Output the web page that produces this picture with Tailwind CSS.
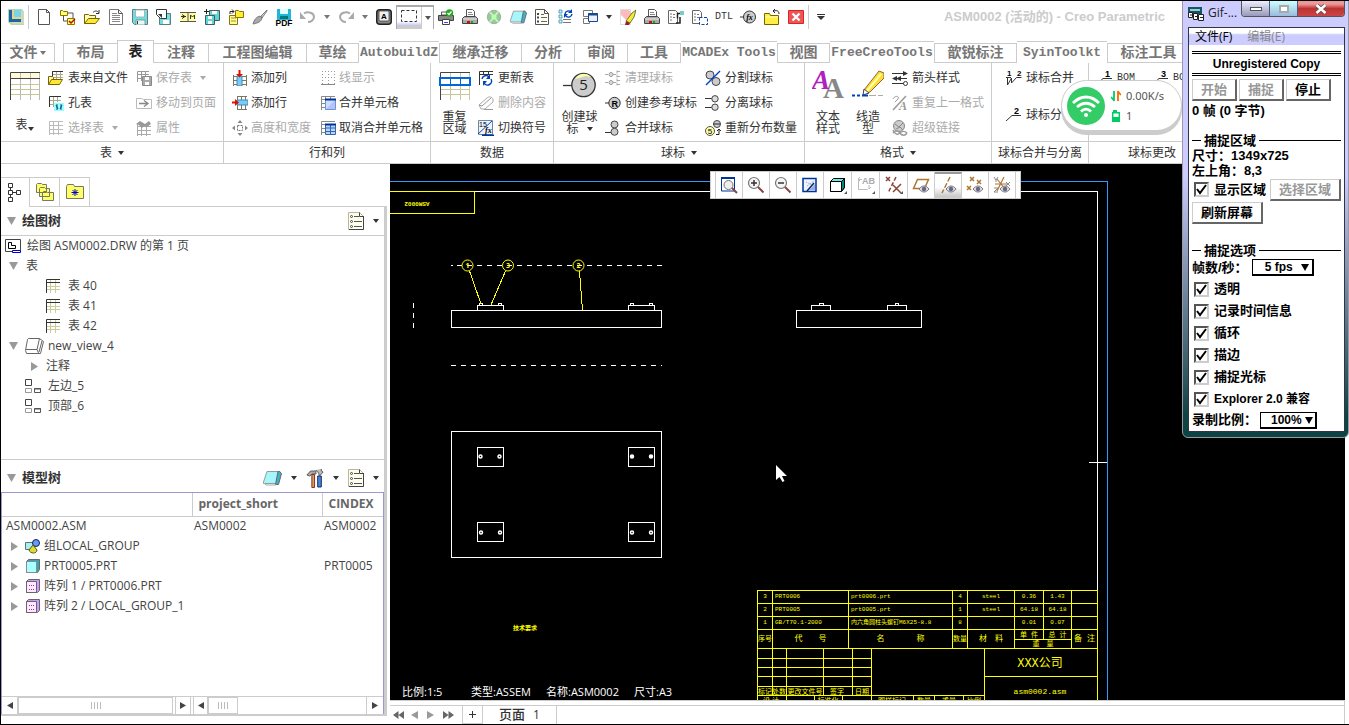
<!DOCTYPE html>
<html lang="zh-CN">
<head>
<meta charset="utf-8">
<title>ASM0002 (活动的) - Creo Parametric</title>
<script src="https://cdn.jsdelivr.net/npm/@tailwindcss/browser@4"></script>
</head>
<body class="bg-black font-['Open_Sans','Noto_Sans_CJK_SC',sans-serif] text-xs text-[#333]">
<svg class="hidden" aria-hidden="true">
  <symbol id="doc" viewBox="0 0 16 16"><path d="M2.5.5h8l3 3v12h-11z" fill="#fff" stroke="#555"/><path d="M10.5.5v3h3" fill="none" stroke="#555"/></symbol>
  <symbol id="doclines" viewBox="0 0 16 16"><path d="M1.500.5h9l4 4v11h-13z" fill="#fff" stroke="#777"/><path d="M10.500.5v4h4" fill="none" stroke="#555"/><path d="M4 4.500h5M4 6.500h8M4 8.500h8M4 10.500h8M4 12.500h8" stroke="#888"/></symbol>
  <symbol id="regen" viewBox="0 0 16 16"><path d="M.5 1.500h2l1 1h4v4h-7zM7.500 9.500h7v6h-7z" fill="#ffff66" stroke="#887700"/><path d="M3.500 7v5h4M8 4h5v5" fill="none" stroke="#555"/><path d="M9 12l2 2 4-4" fill="none" stroke="#c00" stroke-width="1.500"/></symbol>
  <symbol id="open" viewBox="0 0 16 16"><path d="M.5 14.500v-9h4l1 1h6v3" fill="#fffbb0" stroke="#776600"/><path d="M.5 14.500l4-5h11l-4 5z" fill="#ffe733" stroke="#776600"/><path d="M9 3.500c2-2 4-2 5.500 0M15 1v3.500h-3" fill="none" stroke="#333"/></symbol>
  <symbol id="save" viewBox="0 0 16 16"><path d="M.5.5h15v15h-13l-2-2z" fill="#6fdfe2" stroke="#667b80"/><path d="M3.500 1h9v7h-9z" fill="#fff" stroke="#9bb"/><path d="M4 11h9v5H4z" fill="#e8f7f8" stroke="#667b80" stroke-width=".7"/><path d="M5.500 12v3" stroke="#333"/></symbol>
  <symbol id="saveas" viewBox="0 0 16 16"><path d="M3.500 4.500h11v11h-11z" fill="#6fdfe2" stroke="#667b80"/><path d="M7 11h6v4H7z" fill="#fff"/><path d="M.5.500h10v9h-6l-4-4z" fill="#fff" stroke="#333"/><path d="M2 5h4v4z" fill="#333"/></symbol>
  <symbol id="map" viewBox="0 0 16 16"><path d="M0 3h16v10H0z" fill="#fffda0"/><path d="M0 3.500h16M0 12.500h16M8 3v10" stroke="#555"/><path d="M1 7.500h5M2 5.500l3 2-3 2M10.500 10V6l2 2 2-2v4" fill="none" stroke="#333"/></symbol>
  <symbol id="savecopy" viewBox="0 0 16 16"><path d="M5.500 1.500h10v10h-10z" fill="#5fd5d8" stroke="#445b60"/><path d="M8 2h5v3H8z" fill="#fff"/><path d="M1.500 6.500h9v9h-9z" fill="#5fd5d8" stroke="#445b60"/><path d="M4 7h4v3H4zM4 12h4v3H4z" fill="#fff"/><path d="M0 2.500h5M2.500 0v5" stroke="#222"/></symbol>
  <symbol id="copyopen" viewBox="0 0 16 16"><path d="M1.500 6.500h8v9h-8z" fill="#fff8a0" stroke="#887700"/><path d="M3 9h5M3 12h5" stroke="#a90"/><path d="M7.500 1.500h3l1 1h4v6h-8z" fill="#ffee33" stroke="#887700"/><path d="M2 5V2.500h4M4 .5l2 2-2 2" fill="none" stroke="#222"/></symbol>
  <symbol id="brush" viewBox="0 0 16 16"><path d="M15 1l-6 6 1 2 5-7z" fill="#ccc" stroke="#666" stroke-width=".8"/><path d="M1 15c1-4 3-7 7-8l2 2c-1 4-4 5-9 6z" fill="#aaa" stroke="#666" stroke-width=".8"/></symbol>
  <symbol id="pdf" viewBox="0 0 18 18"><path d="M2 1h14v11H2z" fill="#22b5d8"/><path d="M5 1h8v5H5z" fill="#dff"/><path d="M5 8h8v3H5z" fill="#077"/><text x="9" y="18" text-anchor="middle" font-family="Liberation Sans" font-weight="bold" font-size="8.500">PDF</text></symbol>
  <symbol id="undo" viewBox="0 0 16 16"><path d="M4 4.500C8 2 14 4 14 8c0 3-3 5-6 5" fill="none" stroke="#aaa" stroke-width="2"/><path d="M0 3v7h6z" fill="#aaa"/></symbol>
  <symbol id="akey" viewBox="0 0 16 16"><rect x=".75" y=".75" width="14.500" height="14.500" rx="3" fill="#888" stroke="#222" stroke-width="1.500"/><rect x="3" y="2" width="10" height="10" rx="1" fill="#eee" stroke="#333" stroke-width=".7"/><text x="8" y="10" text-anchor="middle" font-family="Liberation Sans" font-weight="bold" font-size="8">A</text></symbol>
  <symbol id="printer" viewBox="0 0 16 16"><path d="M4.500.5h6l2 2v6h-8z" fill="#fff" stroke="#555"/><path d="M6 3.500h4M6 5.500h5" stroke="#888"/><path d="M2.500 7.500h11l2 2v5h-15v-5z" fill="#aaa" stroke="#444"/><path d="M1 10h14" stroke="#eee"/><path d="M5 12h3v2H5z" fill="#e00"/><path d="M9 12h2v2H9z" fill="#0b0"/></symbol>
  <symbol id="printok" viewBox="0 0 16 16"><path d="M3.500 3v3h9V3z" fill="#fff" stroke="#555"/><path d="M.5 6.500h15v5H.5z" fill="#888" stroke="#444"/><path d="M4.500 10.500h7v5h-7z" fill="#fff" stroke="#444"/><path d="M6 13.500h4" stroke="#44f"/><circle cx="11.500" cy="4" r="3.700" fill="#2a2"/><path d="M9.500 4l1.500 1.500L13.500 2.500" stroke="#fff" fill="none" stroke-width="1.200"/></symbol>
  <symbol id="globe" viewBox="0 0 16 16"><circle cx="8" cy="8" r="6.700" fill="#8fcf8f" stroke="#aaa"/><path d="M4 3l8 10M12 3L4 13" stroke="#cdeccd" stroke-width="2"/><circle cx="8" cy="8" r="2.500" fill="#b8ffb0"/></symbol>
  <symbol id="shade" viewBox="0 0 20 16"><path d="M5 1.500h13l-4 12H1.500V12z" fill="#a6f7fb" stroke="#999"/><path d="M16 1.500h1.500l2 2-3 11h-3z" fill="#3fb3c2" stroke="#667"/><path d="M2 13l2 2h10" fill="none" stroke="#aaa"/></symbol>
  <symbol id="list" viewBox="0 0 16 16"><path d="M1.500.5h9l4 4v11h-13z" fill="#fffff4" stroke="#555"/><path d="M10.500.5v4h4" fill="none" stroke="#555"/><path d="M7 5.500h3M7 8.500h6M7 12.500h6" stroke="#666"/><path d="M3 4h2v2H3zM3 7.500h2v2H3zM3 11.500h2v2H3z" fill="#446"/></symbol>
  <symbol id="treelist" viewBox="0 0 16 18"><path d="M.5.5h11l4 4v13H.5z" fill="#fffff0" stroke="#bbb799"/><path d="M11.500.5v4h4M15.500 4v13.500H1" fill="none" stroke="#444"/><path d="M6 4.500h5M6 9.500h8M6 14.500h8" stroke="#555"/><g fill="none" stroke="#444"><circle cx="3.500" cy="4.500" r="1"/><circle cx="3.500" cy="9.500" r="1"/><circle cx="3.500" cy="14.500" r="1"/></g></symbol>
  <symbol id="refreshlist" viewBox="0 0 16 16"><path d="M1 1h3v3H1zM1 6h3v3H1zM1 11h3v3H1z" fill="#bff" stroke="#48a" stroke-width=".8"/><path d="M5 10.500h8M5 13.500h8" stroke="#777"/><path d="M7 5a3.500 3.500 0 0 1 6-2M14 5a3.500 3.500 0 0 1-6 2" fill="none" stroke="#04b" stroke-width="1.400"/><path d="M14 0v4h-4zM6 9V5h4z" fill="#04b"/></symbol>
  <symbol id="windows" viewBox="0 0 16 16"><path d="M1.500 1.500h9v6h-9zM1.500 9.500h6v5h-6z" fill="#fff" stroke="#777"/><path d="M6.500 4.500h9v8h-9z" fill="#eef" stroke="#124a8c"/><path d="M6 5.500h10" stroke="#124a8c" stroke-width="2"/></symbol>
  <symbol id="erase" viewBox="0 0 16 16"><path d="M.5.5h10v15H.5z" fill="#fff" stroke="#ddd"/><path d="M1 1h8l3 4-6 6-5-5z" fill="#fbb"/><path d="M12 4l4-3-2 7-4 6-4-2z" fill="#ee3" stroke="#552" stroke-width=".8"/><path d="M6 12l4 2-1 2H5z" fill="#922"/></symbol>
  <symbol id="docgear" viewBox="0 0 16 16"><path d="M.5 1.500h7l2 2v11h-9z" fill="#fff" stroke="#666"/><path d="M3 4v8M5 5.500h3M5 8.500h3" stroke="#777" stroke-dasharray="2 1"/><path d="M9.500 9.500v-5h5M12 8v6h-4" fill="none" stroke="#222" stroke-width="1.500"/><path d="M12 2h4v4h-4z" fill="#7cc"/></symbol>
  <symbol id="docgrid" viewBox="0 0 16 16"><path d="M.5 1.500h7l2 2v11h-9z" fill="#fff" stroke="#666"/><path d="M3 4v8M5 5.500h3M5 8.500h3" stroke="#777" stroke-dasharray="2 1"/><path d="M7.500 8.500h8v7h-8z" fill="#fff" stroke="#14a" stroke-dasharray="3 1.500"/></symbol>
  <symbol id="fx" viewBox="0 0 16 16"><path d="M0 8h4" stroke="#333"/><circle cx="9.500" cy="8" r="6" fill="#ccc" stroke="#333"/><text x="9.500" y="11" text-anchor="middle" font-family="Liberation Serif" font-style="italic" font-weight="bold" font-size="8">fx</text></symbol>
  <symbol id="folder" viewBox="0 0 16 16"><path d="M.5 4.500h5l1 2h8v9H.5z" fill="#ffee44" stroke="#776600"/><path d="M1 8h13" stroke="#ffffc0"/><path d="M15 5c0-3-2-4-5-3M11 0L9 2l2 2" fill="none" stroke="#222"/></symbol>
  <symbol id="closebox" viewBox="0 0 16 16"><path d="M.5 1.500h15v13H.5z" fill="#e55" stroke="#d22"/><path d="M4.500 4.500l7 7M11.500 4.500l-7 7" stroke="#fff" stroke-width="2.400"/></symbol>
  <symbol id="grid" viewBox="0 0 16 16"><path d="M2 8.500h13M2 11.500h13M5.500 2v13M10.500 2v13" stroke="#cc9"/><path d="M1.500 15V1.500H15M15 4.500H2" fill="none" stroke="#333"/></symbol>
  <symbol id="gridgray" viewBox="0 0 16 16"><path d="M1 5.500h14M1 9.500h14M1 13.500h14M5.500 1v14M10.500 1v14M1.500 15V1.500H15" fill="none" stroke="#bbb"/></symbol>
  <symbol id="biggrid" viewBox="0 0 32 30"><path d="M1 2h30v5H1z" fill="#fffbd8"/><path d="M1 13.500h30M1 18.500h30M1 23.500h30" stroke="#c8c890"/><path d="M11.500 1v28M21.500 1v28M30.500 1v28" stroke="#bbb"/><path d="M1.500 29V1.500H31M1 7.500h30" fill="none" stroke="#444"/></symbol>
  <symbol id="tablefile" viewBox="0 0 16 16"><path d="M4 1.500h11M4 4.500h11M4 7.500h11M8.500 1v9M12.500 1v9" stroke="#aa8"/><path d="M4.500 10V1.500H15" fill="none" stroke="#333"/><path d="M.5 14.500V6.500h4l1 1v3" fill="#fff7a0" stroke="#776600"/><path d="M.5 14.500l3-5h11l-3 5z" fill="#ffe733" stroke="#776600"/></symbol>
  <symbol id="holetable" viewBox="0 0 16 16"><path d="M1 5.500h12M1 9.500h6M5.500 1v11M9.500 1v6" stroke="#aa8"/><path d="M1.500 12V1.500H13" fill="none" stroke="#333"/><path d="M6 8h10v8H6z" fill="#9ff"/><path d="M8 10l2 4M14 10l-2 4M9 15V9M13 15V9" stroke="#047" stroke-width=".9"/></symbol>
  <symbol id="savetable" viewBox="0 0 16 16"><path d="M1 4.500h12M1 8.500h6M5.500 1v10M9.500 1v6M1.500 12V1.500H13" fill="none" stroke="#999"/><path d="M6.500 6.500h9v9h-9z" fill="#aaa" stroke="#888"/><path d="M9 7h4v3H9zM9 12h4v3H9z" fill="#fff"/></symbol>
  <symbol id="movepage" viewBox="0 0 16 16"><path d="M.5 3.500h5l2 1h8v9h-15z" fill="#fff" stroke="#bbb"/><path d="M3 8.500h8M8 5.500l4 3-4 3" fill="none" stroke="#888" stroke-width="1.300"/></symbol>
  <symbol id="props" viewBox="0 0 16 16"><path d="M1 6.500h14M1 10.500h14M1 14.500h14M5.500 4v12M10.500 4v12M1.500 4v12" stroke="#aaa"/><path d="M0 4l4-3 5 3 4-3 2 3-4 3-3-1-2 2-3-3z" fill="#999"/></symbol>
  <symbol id="addcol" viewBox="0 0 16 16"><path d="M1 6.500h14M1 10.500h14M1 14.500h14M1.500 5v11M14.500 5v11" stroke="#776"/><path d="M5 6h5v10H5z" fill="#7cf" stroke="#48a"/><path d="M7.500 0v5" stroke="#d10" stroke-width="2"/><path d="M4 4h7L7.500 7.500z" fill="#d10"/></symbol>
  <symbol id="addrow" viewBox="0 0 16 16"><path d="M5 1.500h10M5 14.500h10M9.500 1v14M13.500 1v14M5.500 1v14" stroke="#776"/><path d="M5 5h11v5H5z" fill="#7cf" stroke="#48a"/><path d="M0 7.500h4" stroke="#d10" stroke-width="2"/><path d="M3 4v7l4-3.500z" fill="#d10"/></symbol>
  <symbol id="size" viewBox="0 0 16 16"><path d="M5.500 5.500h5v5h-5z" fill="#fff" stroke="#777" stroke-dasharray="2 1"/><path d="M8 0l2.500 3h-5zM8 16l2.500-3h-5zM0 8l3-2.500v5zM16 8l-3-2.500v5z" fill="#888"/></symbol>
  <symbol id="linedisp" viewBox="0 0 16 16"><path d="M2.500 1v13M8.500 1v13M14.500 1v13M2 1.500h13M2 7.500h13" stroke="#999" stroke-dasharray="1 2"/><path d="M1 14.500h14" stroke="#888"/></symbol>
  <symbol id="merge" viewBox="0 0 16 16"><path d="M1 4.500h14M1 8.500h5M1 12.500h5M5.500 1v14M10.500 1v4M1.500 15V1.500H15" fill="none" stroke="#888"/><path d="M5.500 4.500h10v10h-10z" fill="#c9dfff" stroke="#69c"/><path d="M6 14L15 5v9z" fill="#b8c0ff"/><path d="M5 4.500h11" stroke="#039" stroke-width="2"/></symbol>
  <symbol id="unmerge" viewBox="0 0 16 16"><path d="M1 4.500h14M1 8.500h5M1 12.500h5M1.500 15V1.500H15" fill="none" stroke="#888"/><path d="M5.500 4.500h10v10h-10z" fill="#b9d5ff" stroke="#36a"/><path d="M5 8h11M5 11.500h11M10.500 4v11" stroke="#36a"/><path d="M5 4.500h11" stroke="#039" stroke-width="2"/></symbol>
  <symbol id="repeat" viewBox="0 0 32 30"><path d="M1 13.500h30M1 18.500h30M1 23.500h30M11.500 1v28M21.500 1v28M30.500 1v28" stroke="#c8c8a0"/><path d="M1.500 29V1.500H31" fill="none" stroke="#444"/><path d="M1 7h30v7H1z" fill="#fff" stroke="#06d" stroke-width="2"/><path d="M11.500 7v7M21.500 7v7" stroke="#06d"/></symbol>
  <symbol id="update" viewBox="0 0 16 16"><path d="M1 4.500h14M1.500 15V1.500H15M5.500 1v4M10.500 1v4" fill="none" stroke="#333"/><path d="M4 9a4 4 0 0 1 7-2M13 9a4 4 0 0 1-7 4" fill="none" stroke="#04b" stroke-width="1.500"/><path d="M12 4v5H8zM5 16v-5h4z" fill="#04b"/></symbol>
  <symbol id="eraser" viewBox="0 0 16 16"><path d="M1 10l8-7c2-2 5-1 6 1v3l-8 7H3z" fill="#fff" stroke="#aaa"/><path d="M1 10l3 1 9-8M15 14.500H6" fill="none" stroke="#999"/></symbol>
  <symbol id="switch" viewBox="0 0 16 16"><path d="M.5.500h14v14H.5z" fill="#eef3ff" stroke="#68a"/><text x="1" y="7" font-family="Liberation Sans" font-size="7">15</text><path d="M0 14L14 1" stroke="#14a" fill="none"/><text x="7" y="13" font-family="Liberation Serif" font-size="8" font-weight="bold" font-style="italic">fx</text><path d="M4 15.500h12" stroke="#039" stroke-width="2"/></symbol>
  <symbol id="balloon" viewBox="0 0 34 28"><path d="M0 14.500h10" stroke="#333" stroke-width="1.300"/><circle cx="20.500" cy="14" r="11.700" fill="#ccc" stroke="#333" stroke-width="1.300"/><path d="M12 8c4-6 11-7 16-2l-5-1z" fill="#ffa"/><text x="20.500" y="19" text-anchor="middle" font-family="Open Sans" font-size="15" fill="#222">5</text></symbol>
  <symbol id="clean" viewBox="0 0 16 16"><path d="M0 4.500h4M8 4.500h3M0 12.500h4M8 12.500h3M12 .500v15M12 1.500h4M12 6.500h4M12 10.500h4M12 14.500h4" stroke="#aaa" stroke-dasharray="3 1"/><circle cx="6" cy="4.500" r="2" fill="#ddd" stroke="#999"/><circle cx="6" cy="12.500" r="2" fill="#ddd" stroke="#999"/></symbol>
  <symbol id="refb" viewBox="0 0 16 16"><path d="M0 8h4" stroke="#333"/><circle cx="9.500" cy="8" r="5.700" fill="#ccc" stroke="#333"/><text x="9.700" y="11.500" text-anchor="middle" font-family="Liberation Sans" font-weight="bold" font-size="9">R</text></symbol>
  <symbol id="mergeb" viewBox="0 0 16 16"><path d="M0 12.500h6" stroke="#333"/><circle cx="9.500" cy="4.500" r="3.500" fill="#ccc" stroke="#444"/><circle cx="9.500" cy="11.800" r="3.500" fill="#ccc" stroke="#444"/></symbol>
  <symbol id="splitb" viewBox="0 0 16 16"><circle cx="5" cy="5" r="4" fill="#ccc" stroke="#444"/><circle cx="11" cy="11.500" r="4" fill="#ccc" stroke="#444"/><path d="M1 15L15 1" stroke="#04c" stroke-width="1.500"/></symbol>
  <symbol id="detach" viewBox="0 0 16 16"><path d="M0 3.500h7M0 12.500h7" stroke="#333"/><circle cx="10" cy="3.800" r="3.200" fill="#ddd" stroke="#444"/><circle cx="10" cy="12.200" r="3.200" fill="#ddd" stroke="#444"/></symbol>
  <symbol id="redist" viewBox="0 0 16 16"><circle cx="5" cy="11" r="4.500" fill="#ffa" stroke="#554"/><text x="5" y="14" text-anchor="middle" font-family="Liberation Sans" font-size="8">5</text><circle cx="12" cy="4" r="3.500" fill="#ccc" stroke="#444"/><path d="M8.500 4H15M11 14.500h3V10M12 11l2-2 2 2" fill="none" stroke="#222"/></symbol>
  <symbol id="textstyle" viewBox="0 0 32 30"><text x="11" y="29" font-family="Liberation Serif" font-weight="bold" font-size="29" fill="#888">A</text><text x="0" y="20" font-family="Liberation Serif" font-style="italic" font-weight="bold" font-size="27" fill="#b020c0">A</text></symbol>
  <symbol id="pencil" viewBox="0 0 32 30"><path d="M12 21L27 2l5 2v5L18 23l-6 2z" fill="#fd3" stroke="#864"/><path d="M15 22L29 5" stroke="#ffa" stroke-width="2"/><path d="M12 20l5 4-6 2z" fill="#fff" stroke="#444"/><path d="M0 26.500h3M5 26.500h3M10 26.500h6" stroke="#04b" stroke-width="2"/><path d="M17 26.500h7M26 26.500h5" stroke="#aaa"/></symbol>
  <symbol id="arrows" viewBox="0 0 16 16"><path d="M0 3.500h15M1 8.500h14M0 13.500h12" stroke="#333"/><path d="M11 1l5 2.500L11 6zM5 6L0 8.500 5 11zM9 6L4 8.500 9 11z" fill="#333"/><circle cx="13.500" cy="13.500" r="2" fill="#fff" stroke="#333"/></symbol>
  <symbol id="lastfmt" viewBox="0 0 16 16"><path d="M1 15L14 1" stroke="#999" stroke-width="1.500"/><path d="M1 4c2-4 7-3 5 0L3 7" fill="none" stroke="#999"/><text x="7" y="15" font-family="Liberation Serif" font-style="italic" font-weight="bold" font-size="12" fill="#999">A</text></symbol>
  <symbol id="link" viewBox="0 0 16 16"><circle cx="7" cy="6" r="5.500" fill="#ccc" stroke="#888"/><path d="M3 4l4 3 4-4M4 9l4-2 3 3" stroke="#888" fill="none"/><path d="M1 13c2-3 5-3 7 0s5 3 7 0M1 10c2 5 5 5 7 3s5-2 7 0" fill="none" stroke="#999" stroke-width="1.500"/></symbol>
  <symbol id="cpl" viewBox="0 0 18 18"><path d="M1 1h14l2 3v13H4L1 14z" fill="#b8d4b0"/><path d="M2 2h12v12H2z" fill="#1c66a8"/><path d="M5 2h9v9H5z" fill="#e8d488"/><path d="M7 2h7v7H7z" fill="#79d4e8"/><path d="M4 14l2 2h11V5l-3-3v12z" fill="#ced8ba"/></symbol>
  <symbol id="viewcube" viewBox="0 0 20 18"><path d="M1.500 16.500l-1-3 2-11 1-1h11l4 3-3 12z" fill="#fff" stroke="#666"/><path d="M1 12.500h11l1.500 3.500M12 12.500l2.500-11M14 15l3-11" fill="none" stroke="#666"/></symbol>
  <symbol id="dviews" viewBox="0 0 16 16"><path d="M.5 1.500h6v6h-6z" fill="#fff" stroke="#444"/><path d="M.5 10.500h6v4h-6z" fill="#fff" stroke="#999"/><path d="M9.500 10.500h6v4h-6z" fill="#fff" stroke="#555"/><path d="M9 11h7" stroke="#555"/></symbol>
  <symbol id="eye" viewBox="0 0 12 8"><path d="M1 4c3-4 7-4 10 0-3 4-7 4-10 0z" fill="#ddd" stroke="#777"/><circle cx="6" cy="4" r="2.200" fill="#668"/></symbol>
  <symbol id="pattern" viewBox="0 0 14 14"><path d="M.5 2.500l2-2h11v11l-2 2H.5z" fill="#c9f" stroke="#666"/><path d="M.5 2.500h10v11H.5z" fill="#ffe8ff" stroke="#666"/><path d="M3 6h1v1H3zM5 6h1v1H5zM7 6h1v1H7zM3 10h1v1H3zM5 10h1v1H5zM7 10h1v1H7z" fill="#939"/></symbol>
  <symbol id="part" viewBox="0 0 14 14"><path d="M.5 2.500l2-2h11v10l-2 3H.5z" fill="#3aa" stroke="#667"/><path d="M.5 2.500h10v11H.5z" fill="#aff" stroke="#889"/></symbol>
  <symbol id="mag" viewBox="0 0 18 18"><circle cx="7" cy="7" r="5.500" fill="#f4f4f4" stroke="#777" stroke-width="1.200"/><path d="M11 11l5.500 5.500" stroke="#844" stroke-width="2"/></symbol>
  <symbol id="tri" viewBox="0 0 6 4"><path d="M0 0h6L3 4z" fill="currentColor"/></symbol>
  <symbol id="tick" viewBox="0 0 15 15"><path d="M3 7l3 4 6-8" fill="none" stroke="#000" stroke-width="2"/></symbol>
</svg>

<div class="relative flex h-screen min-h-[725px] flex-col overflow-hidden border-y border-l border-black bg-white">

  <!-- Quick access toolbar -->
  <header class="flex h-8 items-center" aria-label="快速访问工具栏">
    <svg class="ml-1.5 size-[18px]"><use href="#cpl"/></svg>
    <span class="mx-[3px] h-6 w-px bg-[#ccc]"></span>
    <button class="flex w-6 justify-center" aria-label="新建"><svg class="size-4"><use href="#doc"/></svg></button>
    <button class="flex w-6 justify-center" aria-label="重新生成"><svg class="size-4"><use href="#regen"/></svg></button>
    <button class="flex w-6 justify-center" aria-label="打开"><svg class="size-4"><use href="#open"/></svg></button>
    <button class="flex w-6 justify-center" aria-label="文档"><svg class="size-4"><use href="#doclines"/></svg></button>
    <button class="flex w-6 justify-center" aria-label="保存"><svg class="size-4"><use href="#save"/></svg></button>
    <button class="flex w-6 justify-center" aria-label="另存为"><svg class="size-4"><use href="#saveas"/></svg></button>
    <button class="flex w-6 justify-center" aria-label="映射"><svg class="size-4"><use href="#map"/></svg></button>
    <button class="flex w-6 justify-center" aria-label="保存副本"><svg class="size-4"><use href="#savecopy"/></svg></button>
    <button class="flex w-6 justify-center" aria-label="打开副本"><svg class="size-4"><use href="#copyopen"/></svg></button>
    <button class="flex w-6 justify-center" aria-label="刷子"><svg class="size-4"><use href="#brush"/></svg></button>
    <button class="flex w-6 justify-center" aria-label="PDF"><svg class="size-[18px]"><use href="#pdf"/></svg></button>
    <button class="flex w-6 justify-center" aria-label="撤消"><svg class="size-4"><use href="#undo"/></svg></button>
    <button class="flex w-3.5 justify-center text-[#777]" aria-label="撤消列表"><svg class="h-1 w-1.5"><use href="#tri"/></svg></button>
    <button class="flex w-6 justify-center" aria-label="重做"><svg class="size-4 -scale-x-100"><use href="#undo"/></svg></button>
    <button class="flex w-3.5 justify-center text-[#777]" aria-label="重做列表"><svg class="h-1 w-1.5"><use href="#tri"/></svg></button>
    <button class="flex w-6 justify-center" aria-label="按键"><svg class="size-4"><use href="#akey"/></svg></button>
    <span class="flex h-6 w-[38px] border-x border-t-2 border-[#aaa]">
      <button class="flex flex-1 items-center justify-center border-b-4 border-[#ccc] bg-linear-to-b from-white from-80% to-[#ccf]" aria-label="选择"><svg class="h-3 w-4" viewBox="0 0 16 12"><path d="M.5.5h15v11H.5z" fill="none" stroke="#333" stroke-dasharray="3 2"/></svg></button>
      <button class="flex w-3 items-center justify-center border-l border-[#ccc] text-[#555]" aria-label="选择列表"><svg class="h-1 w-1.5"><use href="#tri"/></svg></button>
    </span>
    <button class="flex w-6 justify-center" aria-label="快速打印"><svg class="size-4"><use href="#printok"/></svg></button>
    <button class="flex w-6 justify-center" aria-label="打印"><svg class="size-4"><use href="#printer"/></svg></button>
    <button class="flex w-6 justify-center" aria-label="外观"><svg class="size-4"><use href="#globe"/></svg></button>
    <button class="flex w-6 justify-center" aria-label="着色"><svg class="h-4 w-[18px]"><use href="#shade"/></svg></button>
    <button class="flex w-6 justify-center" aria-label="列表"><svg class="size-4"><use href="#list"/></svg></button>
    <button class="flex w-6 justify-center" aria-label="更新列表"><svg class="size-4"><use href="#refreshlist"/></svg></button>
    <button class="flex w-6 justify-center" aria-label="窗口"><svg class="size-4"><use href="#windows"/></svg></button>
    <button class="flex w-3.5 justify-center" aria-label="窗口列表"><svg class="h-1 w-1.5"><use href="#tri"/></svg></button>
    <button class="flex w-6 justify-center" aria-label="拭除"><svg class="size-4"><use href="#erase"/></svg></button>
    <button class="flex w-6 justify-center" aria-label="打印设置"><svg class="size-4"><use href="#printer"/></svg></button>
    <button class="flex w-6 justify-center" aria-label="转换"><svg class="size-4"><use href="#docgear"/></svg></button>
    <button class="flex w-6 justify-center" aria-label="区域"><svg class="size-4"><use href="#docgrid"/></svg></button>
    <button class="flex w-6 justify-center font-['Liberation_Mono',monospace] text-[10px]">DTL</button>
    <button class="flex w-6 justify-center" aria-label="参数"><svg class="size-4"><use href="#fx"/></svg></button>
    <button class="flex w-6 justify-center" aria-label="工作目录"><svg class="size-4"><use href="#folder"/></svg></button>
    <button class="flex w-6 justify-center" aria-label="关闭"><svg class="size-4"><use href="#closebox"/></svg></button>
    <span class="mr-2 h-6 w-px bg-[#ccc]"></span>
    <button aria-label="自定义"><svg class="h-1.5 w-2" viewBox="0 0 8 6"><path d="M0 0h8v1H0zM0 2h8L4 6z" fill="#333"/></svg></button>
    <h1 class="ml-auto mr-[184px] font-['Liberation_Sans','Noto_Sans_CJK_SC',sans-serif] text-[13px] font-bold whitespace-nowrap text-[#ccc]">ASM0002 (活动的) - Creo Parametric</h1>
  </header>

  <!-- Ribbon tabs -->
  <nav class="mt-1.5 flex h-6 items-end font-['Liberation_Mono','Noto_Sans_CJK_SC',monospace] text-[13px] leading-none font-bold whitespace-nowrap text-[#777]" aria-label="功能区">
    <button class="flex h-5 w-[54px] items-center justify-center gap-0.5 border border-l-0 border-[#ccc] text-sm leading-none">文件<svg class="h-1 w-1.5"><use href="#tri"/></svg></button>
    <span class="w-2 border-b border-[#ccc]"></span>
    <button class="h-5 w-[54px] border border-r-0 border-[#ccc] text-sm leading-none">布局</button>
    <button class="h-[23px] w-[37px] border border-b-0 border-[#ccc] text-sm leading-none text-[#222]">表</button>
    <button class="h-5 w-[54px] border-y border-[#ccc] text-sm leading-none">注释</button>
    <button class="h-5 w-[98px] border border-r-0 border-[#ccc] text-sm leading-none">工程图编辑</button>
    <button class="h-5 w-[53px] border border-[#ccc] text-sm leading-none">草绘</button>
    <button class="h-[22px] w-20 border-t border-[#ccc]">AutobuildZ</button>
    <button class="h-5 w-[83px] border border-[#ccc] text-sm leading-none">继承迁移</button>
    <button class="h-5 w-[53px] border-y border-r border-[#ccc] text-sm leading-none">分析</button>
    <button class="h-5 w-[53px] border-y border-r border-[#ccc] text-sm leading-none">审阅</button>
    <button class="h-5 w-[53px] border-y border-r border-[#ccc] text-sm leading-none">工具</button>
    <button class="h-[22px] w-24 border-t border-[#ccc]">MCADEx Tools</button>
    <button class="h-5 w-[53px] border border-[#ccc] text-sm leading-none">视图</button>
    <button class="h-[22px] w-[104px] border-t border-[#ccc]">FreeCreoTools</button>
    <button class="h-5 w-[83px] border border-[#ccc] text-sm leading-none">歆锐标注</button>
    <button class="h-[22px] w-[90px] border-t border-[#ccc]">SyinToolkt</button>
    <button class="h-5 w-[83px] border border-[#ccc] text-sm leading-none">标注工具</button>
    <span class="flex-1 border-b border-[#ccc]"></span>
  </nav>

  <!-- Ribbon groups -->
  <div class="flex h-[101px] shrink-0 border-b border-[#ccc] whitespace-nowrap">
    <section class="flex w-[223px] flex-col border-r border-[#ccc]">
      <div class="flex flex-1 pt-0.5">
        <button class="flex w-[47px] flex-col items-center pt-1.5"><svg class="h-[30px] w-8"><use href="#biggrid"/></svg><span class="mt-[18px] flex items-end leading-3">表<svg class="h-1 w-1.5"><use href="#tri"/></svg></span></button>
        <div class="flex w-[88px] flex-col">
          <button class="flex h-[25px] items-center gap-1"><svg class="size-4"><use href="#tablefile"/></svg>表来自文件</button>
          <button class="flex h-[25px] items-center gap-1"><svg class="size-4"><use href="#holetable"/></svg>孔表</button>
          <button class="flex h-[25px] items-center gap-1 text-[#aaa]"><svg class="size-4"><use href="#gridgray"/></svg>选择表<svg class="ml-1 h-1 w-1.5"><use href="#tri"/></svg></button>
        </div>
        <div class="flex flex-col text-[#aaa]">
          <button class="flex h-[25px] items-center gap-1"><svg class="size-4"><use href="#savetable"/></svg>保存表<svg class="ml-1 h-1 w-1.5"><use href="#tri"/></svg></button>
          <button class="flex h-[25px] items-center gap-1"><svg class="size-4"><use href="#movepage"/></svg>移动到页面</button>
          <button class="flex h-[25px] items-center gap-1"><svg class="size-4"><use href="#props"/></svg>属性</button>
        </div>
      </div>
      <h2 class="flex h-[22px] items-center justify-center gap-1.5 border-t border-[#ccc]">表<svg class="h-1 w-1.5"><use href="#tri"/></svg></h2>
    </section>
    <section class="flex w-[207px] flex-col border-r border-[#ccc]">
      <div class="flex flex-1 pt-0.5 pl-2">
        <div class="flex w-[88px] flex-col">
          <button class="flex h-[25px] items-center gap-[3px]"><svg class="size-4"><use href="#addcol"/></svg>添加列</button>
          <button class="flex h-[25px] items-center gap-[3px]"><svg class="size-4"><use href="#addrow"/></svg>添加行</button>
          <button class="flex h-[25px] items-center gap-[3px] text-[#aaa]"><svg class="size-4"><use href="#size"/></svg>高度和宽度</button>
        </div>
        <div class="flex flex-col">
          <button class="flex h-[25px] items-center gap-[3px] text-[#aaa]"><svg class="size-4"><use href="#linedisp"/></svg>线显示</button>
          <button class="flex h-[25px] items-center gap-[3px]"><svg class="size-4"><use href="#merge"/></svg>合并单元格</button>
          <button class="flex h-[25px] items-center gap-[3px]"><svg class="size-4"><use href="#unmerge"/></svg>取消合并单元格</button>
        </div>
      </div>
      <h2 class="flex h-[22px] items-center justify-center border-t border-[#ccc]">行和列</h2>
    </section>
    <section class="flex w-[123px] flex-col border-r border-[#ccc]">
      <div class="flex flex-1 pt-0.5">
        <button class="flex w-[47px] flex-col items-center pt-1.5 leading-3"><svg class="h-[30px] w-8"><use href="#repeat"/></svg><span class="mt-2.5">重复<br>区域</span></button>
        <div class="flex flex-col">
          <button class="flex h-[25px] items-center gap-1"><svg class="size-4"><use href="#update"/></svg>更新表</button>
          <button class="flex h-[25px] items-center gap-1 text-[#aaa]"><svg class="size-4"><use href="#eraser"/></svg>删除内容</button>
          <button class="flex h-[25px] items-center gap-1"><svg class="size-4"><use href="#switch"/></svg>切换符号</button>
        </div>
      </div>
      <h2 class="flex h-[22px] items-center justify-center border-t border-[#ccc]">数据</h2>
    </section>
    <section class="flex w-[251px] flex-col border-r border-[#ccc]">
      <div class="flex flex-1 pt-0.5">
        <button class="flex w-[51px] flex-col items-center pt-1.5 leading-3"><svg class="h-7 w-[34px]"><use href="#balloon"/></svg><span class="mt-3">创建球</span><span class="flex items-center gap-2">标<svg class="h-1 w-1.5"><use href="#tri"/></svg></span></button>
        <div class="flex w-[100px] flex-col">
          <button class="flex h-[25px] items-center gap-1 text-[#aaa]"><svg class="size-4"><use href="#clean"/></svg>清理球标</button>
          <button class="flex h-[25px] items-center gap-1"><svg class="size-4"><use href="#refb"/></svg>创建参考球标</button>
          <button class="flex h-[25px] items-center gap-1"><svg class="size-4"><use href="#mergeb"/></svg>合并球标</button>
        </div>
        <div class="flex flex-col">
          <button class="flex h-[25px] items-center gap-1"><svg class="size-4"><use href="#splitb"/></svg>分割球标</button>
          <button class="flex h-[25px] items-center gap-1"><svg class="size-4"><use href="#detach"/></svg>分离球标</button>
          <button class="flex h-[25px] items-center gap-1"><svg class="size-4"><use href="#redist"/></svg>重新分布数量</button>
        </div>
      </div>
      <h2 class="flex h-[22px] items-center justify-center gap-1.5 border-t border-[#ccc]">球标<svg class="h-1 w-1.5"><use href="#tri"/></svg></h2>
    </section>
    <section class="flex w-[187px] flex-col border-r border-[#ccc]">
      <div class="flex flex-1 pt-0.5 pl-[3px]">
        <button class="flex w-10 flex-col items-center pt-1 leading-3"><svg class="h-[30px] w-8"><use href="#textstyle"/></svg><span class="mt-3">文本<br>样式</span></button>
        <button class="flex w-10 flex-col items-center pt-1 leading-3"><svg class="h-[30px] w-8"><use href="#pencil"/></svg><span class="mt-3">线造<br>型</span></button>
        <div class="ml-1 flex flex-col">
          <button class="flex h-[25px] items-center gap-1"><svg class="size-4"><use href="#arrows"/></svg>箭头样式</button>
          <button class="flex h-[25px] items-center gap-1 text-[#aaa]"><svg class="size-4"><use href="#lastfmt"/></svg>重复上一格式</button>
          <button class="flex h-[25px] items-center gap-1 text-[#aaa]"><svg class="size-4"><use href="#link"/></svg>超级链接</button>
        </div>
      </div>
      <h2 class="flex h-[22px] items-center justify-center gap-1.5 border-t border-[#ccc]">格式<svg class="h-1 w-1.5"><use href="#tri"/></svg></h2>
    </section>
    <section class="flex w-[97px] flex-col border-r border-[#ccc]">
      <div class="flex flex-1 flex-col gap-3 pt-0.5 pl-3.5">
        <button class="flex h-[25px] items-center gap-1"><svg class="size-4" viewBox="0 0 16 16"><path d="M0 7.500h5M1.500 8v7M1.500 15L5.500 8v5l5-5.500h5" fill="none" stroke="#333"/><text x="1" y="6" font-family="Liberation Sans" font-weight="bold" font-size="8">1</text><text x="11" y="6" font-family="Liberation Sans" font-weight="bold" font-size="8">2</text></svg>球标合并</button>
        <button class="flex h-[25px] items-center gap-1"><svg class="size-4" viewBox="0 0 16 16"><path d="M0 14l6-5.500h9" fill="none" stroke="#333"/><text x="8" y="7" font-family="Liberation Sans" font-weight="bold" font-size="9">2</text></svg>球标分离</button>
      </div>
      <h2 class="flex h-[22px] items-center justify-center border-t border-[#ccc]">球标合并与分离</h2>
    </section>
    <section class="flex flex-1 flex-col">
      <div class="flex flex-1 gap-3 pt-0.5 pl-2">
        <div class="flex flex-col font-['Liberation_Mono',monospace] text-[10px]">
          <button class="flex h-[25px] items-center gap-1"><svg class="size-4" viewBox="0 0 16 16"><path d="M0 14l6-5.500h9" fill="none" stroke="#333"/><text x="8" y="7" font-family="Liberation Sans" font-weight="bold" font-size="9">1</text></svg>BOM</button>
          <button class="mt-[25px] flex h-[25px] items-center gap-1"><svg class="size-4" viewBox="0 0 16 16"><path d="M0 14l6-5.500h9" fill="none" stroke="#333"/></svg>BOM2</button>
        </div>
        <div class="flex flex-col font-['Liberation_Mono',monospace] text-[10px]">
          <button class="flex h-[25px] items-center gap-1"><svg class="size-4" viewBox="0 0 16 16"><path d="M0 14l6-5.500h9" fill="none" stroke="#333"/><text x="8" y="7" font-family="Liberation Sans" font-weight="bold" font-size="9">3</text></svg>BOM</button>
        </div>
      </div>
      <h2 class="flex h-[22px] items-center border-t border-[#ccc] pl-[39px]">球标更改</h2>
    </section>
  </div>

  <div class="flex min-h-0 flex-1">
    <!-- Navigator -->
    <aside class="flex w-[389px] shrink-0 flex-col pt-[13px] pr-[3px] pb-2">
      <div class="flex h-[30px] shrink-0">
        <button class="flex w-7 items-center justify-center border-t border-[#ccc]" aria-label="模型树"><svg class="h-5 w-3.5" viewBox="0 0 14 20"><path d="M.5.5h4v4h-4zM.5 7.500h4v4h-4zM.5 14.500h4v4h-4zM8.500 7.500h4v4h-4zM2.500 5v3M2.500 12v3M5 9.500h3" fill="none" stroke="#333"/></svg></button>
        <button class="flex w-[31px] items-center justify-center border border-[#ccc]" aria-label="文件夹"><svg class="size-[18px]" viewBox="0 0 18 18"><path d="M.5 1.500l1-1h4l1 1h4v8H.5zM3.500 5.500l1-1h4l1 1h4v8h-10zM6.500 9.500l1-1h3l1 1h6v8h-11z" fill="#ffff66" stroke="#776"/></svg></button>
        <button class="flex w-[30px] items-center justify-center border border-l-0 border-[#ccc]" aria-label="收藏夹"><svg class="h-4 w-[18px]" viewBox="0 0 18 16"><path d="M.5 2.500l1-2h6l1 2h9v12H.5z" fill="#ffff66" stroke="#776"/><path d="M9 5v7M5.500 8.500h7M6.500 6l5 5M11.500 6l-5 5" stroke="#00c"/></svg></button>
        <span class="flex-1 border-b border-[#ccc]"></span>
      </div>
      <div class="flex min-h-0 flex-1 flex-col border-r-3 border-b-2 border-[#ccc]">
        <div class="flex h-[29px] shrink-0 items-center border-b border-[#ccc] pl-1.5">
          <svg class="mr-1.5 h-2 w-[9px]" viewBox="0 0 9 8"><path d="M0 0h9L4.500 8z" fill="#999"/></svg>
          <h2 class="flex-1 text-[13px] font-bold">绘图树</h2>
          <button aria-label="设置"><svg class="h-[18px] w-4"><use href="#treelist"/></svg></button>
          <button class="mr-[5px] ml-[9px]" aria-label="设置列表"><svg class="h-1 w-1.5"><use href="#tri"/></svg></button>
        </div>
        <ul class="h-[223px] shrink-0 text-[#444]">
          <li class="flex h-5 items-center gap-1.5 pl-1"><svg class="h-3.5 w-4" viewBox="0 0 16 14"><path d="M.5.500h15v12H.5z" fill="#fff" stroke="#444"/><path d="M3.500 3.500h3v3h4v3h-7z" fill="none" stroke="#000"/><path d="M7.500 11.500h8v2h-8z" fill="#fff" stroke="#00c"/></svg>绘图 ASM0002.DRW 的第 1 页</li>
          <li class="flex h-5 items-center gap-2 pl-2"><svg class="h-2 w-[9px]" viewBox="0 0 9 8"><path d="M0 0h9L4.500 8z" fill="#999"/></svg>表</li>
          <li class="flex h-5 items-center gap-[7px] pl-11"><svg class="size-4"><use href="#grid"/></svg><span>表 40</span></li>
          <li class="flex h-5 items-center gap-[7px] pl-11"><svg class="size-4"><use href="#grid"/></svg><span>表 41</span></li>
          <li class="flex h-5 items-center gap-[7px] pl-11"><svg class="size-4"><use href="#grid"/></svg><span>表 42</span></li>
          <li class="flex h-5 items-center pl-2"><svg class="mr-[7px] h-2 w-[9px]" viewBox="0 0 9 8"><path d="M0 0h9L4.500 8z" fill="#999"/></svg><svg class="mr-[3px] h-[18px] w-5"><use href="#viewcube"/></svg>new_view_4</li>
          <li class="flex h-5 items-center gap-2 pl-[30px]"><svg class="h-[9px] w-[7px]" viewBox="0 0 7 9"><path d="M0 0v9l7-4.500z" fill="#999"/></svg>注释</li>
          <li class="flex h-5 items-center gap-[7px] pl-6"><svg class="size-4"><use href="#dviews"/></svg>左边_5</li>
          <li class="flex h-5 items-center gap-[7px] pl-6"><svg class="size-4"><use href="#dviews"/></svg>顶部_6</li>
        </ul>
        <div class="flex h-[33px] shrink-0 items-center border-t border-[#ccc] pt-1 pl-1.5">
          <svg class="mr-1.5 h-2 w-[9px]" viewBox="0 0 9 8"><path d="M0 0h9L4.500 8z" fill="#999"/></svg>
          <h2 class="flex-1 text-[13px] font-bold">模型树</h2>
          <button aria-label="显示"><svg class="h-4 w-5"><use href="#shade"/></svg></button>
          <button class="mx-[9px]" aria-label="显示列表"><svg class="h-1 w-1.5"><use href="#tri"/></svg></button>
          <button aria-label="工具"><svg class="h-5 w-[18px]" viewBox="0 0 20 20" preserveAspectRatio="none"><path d="M1 7l4-4h6v3H7L4 8z" fill="#aaa" stroke="#555"/><path d="M6.500 6.500h3v13h-3z" fill="#d95" stroke="#732"/><path d="M13 8h4v11h-4z" fill="#48d" stroke="#125"/><path d="M11 2l3 3 1 3 4-4-2-1V1" fill="#bbb" stroke="#555"/></svg></button>
          <button class="mx-[9px]" aria-label="工具列表"><svg class="h-1 w-1.5"><use href="#tri"/></svg></button>
          <button aria-label="设置"><svg class="h-[18px] w-4"><use href="#treelist"/></svg></button>
          <button class="mr-[5px] ml-[9px]" aria-label="设置列表"><svg class="h-1 w-1.5"><use href="#tri"/></svg></button>
        </div>
        <div class="flex min-h-0 flex-1 flex-col border-x border-t border-[#99c]">
          <table class="w-full table-fixed border-collapse text-left whitespace-nowrap text-[#444]">
            <thead>
              <tr class="h-[23px] border-b border-[#ccc] text-[#666]">
                <th class="w-[190px]"></th>
                <th class="w-[130px] border-l border-[#ccc] pl-1.5 font-bold">project_short</th>
                <th class="border-l border-[#ccc] pl-1.5 font-bold">CINDEX</th>
              </tr>
            </thead>
            <tbody>
              <tr class="h-5"><td class="pl-1">ASM0002.ASM</td><td class="pl-0.5">ASM0002</td><td class="pl-0.5">ASM0002</td></tr>
              <tr class="h-5"><td class="pl-[9px]"><span class="flex items-center"><svg class="mr-[7px] h-[9px] w-[7px]" viewBox="0 0 7 9"><path d="M0 0v9l7-4.500z" fill="#999"/></svg><svg class="mr-1 size-[15px]" viewBox="0 0 15 15"><path d="M.5 3.500h9v7h-9z" fill="#aee" stroke="#577"/><circle cx="11" cy="4" r="3.500" fill="#69f" stroke="#124"/><path d="M8 6l4 5c0 4-7 4-8 0z" fill="#dd3" stroke="#552"/></svg>组LOCAL_GROUP</span></td><td></td><td></td></tr>
              <tr class="h-5"><td class="pl-[9px]"><span class="flex items-center"><svg class="mr-2 h-[9px] w-[7px]" viewBox="0 0 7 9"><path d="M0 0v9l7-4.500z" fill="#999"/></svg><svg class="mr-1 size-3.5"><use href="#part"/></svg>PRT0005.PRT</span></td><td></td><td class="pl-0.5">PRT0005</td></tr>
              <tr class="h-5"><td class="pl-[9px]"><span class="flex items-center"><svg class="mr-2 h-[9px] w-[7px]" viewBox="0 0 7 9"><path d="M0 0v9l7-4.500z" fill="#999"/></svg><svg class="mr-1 size-3.5"><use href="#pattern"/></svg>阵列 1 / PRT0006.PRT</span></td><td></td><td></td></tr>
              <tr class="h-5"><td class="pl-[9px]"><span class="flex items-center"><svg class="mr-2 h-[9px] w-[7px]" viewBox="0 0 7 9"><path d="M0 0v9l7-4.500z" fill="#999"/></svg><svg class="mr-1 size-3.5"><use href="#pattern"/></svg>阵列 2 / LOCAL_GROUP_1</span></td><td></td><td></td></tr>
            </tbody>
          </table>
          <div class="mt-auto flex h-[18px] border-t border-[#ccc] px-px">
            <div class="flex w-[188px]">
              <button class="flex w-[15px] items-center justify-center border-r border-[#ccc]" aria-label="向左"><svg class="h-[7px] w-1.5" viewBox="0 0 6 7"><path d="M6 0v7L0 3.500z" fill="#444"/></svg></button>
              <span class="flex w-[155px] items-center justify-center border border-[#ccc]"><svg class="h-[7px] w-3" viewBox="0 0 12 7"><path d="M1.500 0v7M4.500 0v7M7.500 0v7M10.500 0v7" stroke="#bbb"/></svg></span>
              <button class="ml-0.5 flex w-4 items-center justify-center border-x border-[#ccc]" aria-label="向右"><svg class="h-[7px] w-1.5" viewBox="0 0 6 7"><path d="M0 0v7l6-3.500z" fill="#444"/></svg></button>
            </div>
            <div class="ml-0.5 flex flex-1">
              <button class="flex w-[15px] items-center justify-center border-x border-[#ccc]" aria-label="向左"><svg class="h-[7px] w-1.5" viewBox="0 0 6 7"><path d="M6 0v7L0 3.500z" fill="#444"/></svg></button>
              <span class="flex w-[30px] items-center justify-center border border-[#ccc]"><svg class="h-[7px] w-3" viewBox="0 0 12 7"><path d="M1.500 0v7M4.500 0v7M7.500 0v7M10.500 0v7" stroke="#bbb"/></svg></span>
              <button class="ml-auto flex w-4 items-center justify-center border-l border-[#ccc]" aria-label="向右"><svg class="h-[7px] w-1.5" viewBox="0 0 6 7"><path d="M0 0v7l6-3.500z" fill="#444"/></svg></button>
            </div>
          </div>
        </div>
      </div>
    </aside>

    <!-- Drawing area -->
    <main class="flex min-w-0 flex-1 flex-col pr-1">
      <div class="relative min-h-0 flex-1 overflow-hidden bg-black">
        <svg class="absolute inset-0 h-full w-full" font-family="Open Sans, Noto Sans CJK SC, sans-serif" role="img" aria-label="工程图">
          <g transform="translate(-390 -164)" fill="none" shape-rendering="crispEdges">
            <path d="M390 181.500H1107.500V705" stroke="#39f"/>
            <path d="M474 191.500H1097.500V705M1089 462.500h18" stroke="#fff"/>
            <path d="M1097.500 590v115M390 191.500h84.500v22H390" stroke="#ff0"/>
            <g stroke="#fff">
              <path d="M451 265.500h2"/><path d="M457 265.500h205M451 365.500h211M413.500 303v25" stroke-dasharray="5 5"/>
              <path d="M451.500 310.500h210v17h-210zM477.500 310v-4.500h26v4.500M479.500 305v-2h3v2M498.500 305v-2h3v2M628.500 310v-4.500h26v4.500M630.500 305v-2h3v2M649.500 305v-2h3v2"/>
              <path d="M796.500 310.500h125v17h-125zM811.500 310v-4.500h19v4.500M819.500 305v-2h4v2M887.500 310v-4.500h19v4.500M895.500 305v-2h3v2"/>
              <path d="M451.500 431.500h210v126h-210zM477.500 447.500h26v19h-26zM628.500 447.500h26v19h-26zM477.500 522.500h26v19h-26zM628.500 522.500h26v19h-26z"/>
              <g shape-rendering="auto" stroke-width="1.500">
                <circle cx="480.500" cy="456.500" r="1.500"/><circle cx="499.500" cy="456.500" r="1.500"/><circle cx="632" cy="456.500" r="1.500" fill="#fff"/><circle cx="651" cy="456.500" r="1.500" fill="#fff"/>
                <circle cx="481" cy="532.500" r="1.500"/><circle cx="500" cy="532.500" r="1.500"/><circle cx="632" cy="532.500" r="1.500"/><circle cx="651" cy="532.500" r="1.500"/>
              </g>
            </g>
            <g stroke="#ff0">
              <g shape-rendering="auto"><circle cx="467.500" cy="265.500" r="5.500"/><circle cx="508" cy="265.500" r="5.500"/><circle cx="578.500" cy="265.500" r="5.500"/></g>
              <path d="M469.500 271l11.500 33M505.500 271l-14.500 34M579.500 271l3 39"/>
              <path d="M757.500 648v57M772.500 648v47M786.500 648v57M823.500 648v47M852.500 648v47M871.500 648v57M757 658.500h114M757 667.500h114M757 676.500h114M757 686.500h114M757 695.500h227M814.500 695v10M842.500 695v10M913.500 695v10M934.500 695v10M963.500 695v10M984.500 648v57M984 676.500h113"/>
            </g>
            <g fill="#ff0" text-anchor="middle" font-size="7" font-weight="bold">
              <text x="467.500" y="268">1</text><text x="508" y="268">3</text><text x="578.500" y="268">2</text>
              <text transform="translate(417 202) rotate(180)" font-family="Liberation Mono" font-size="6">ASM0002</text>
              <text x="525" y="630" font-size="6">技术要求</text>
              <g font-weight="normal">
                <text x="765" y="694">标记</text><text x="779" y="694">处数</text><text x="805" y="694">更改文件号</text><text x="837" y="694">签字</text><text x="862" y="694">日期</text>
                <text x="771" y="703">设 计</text><text x="828" y="703">标准化</text><text x="892" y="703">图样标记</text><text x="924" y="703">数量</text><text x="949" y="703">重量</text><text x="974" y="703">比例</text>
                <text x="1040" y="667" font-family="Liberation Mono, Noto Sans CJK SC" font-size="12">XXX公司</text>
                <text x="1040" y="694" font-family="Liberation Mono" font-size="8">asm0002.asm</text>
              </g>
            </g>
            <g fill="#fff" font-size="11">
              <text x="402" y="696">比例:1:5</text><text x="471" y="696">类型:ASSEM</text><text x="546" y="696">名称:ASM0002</text><text x="634" y="696">尺寸:A3</text>
            </g>
            <path d="M776 465v15l3.500-3 3 5 2-1-2.500-5h5z" fill="#fff" shape-rendering="auto"/>
          </g>
        </svg>

        <!-- Bill of materials -->
        <table class="absolute top-[426px] left-[367px] w-[341px] table-fixed border-collapse text-center font-['Liberation_Mono','Noto_Sans_CJK_SC',monospace] text-[6px] leading-[8px] whitespace-nowrap text-[#ff0]">
          <colgroup><col class="w-[15px]"><col class="w-[76px]"><col class="w-[104px]"><col class="w-[15px]"><col class="w-[47px]"><col class="w-[29px]"><col class="w-[28px]"><col></colgroup>
          <tbody>
            <tr class="h-[13px]"><td class="border">3</td><td class="border pl-0.5 text-left">PRT0006</td><td class="border pl-0.5 text-left">prt0006.prt</td><td class="border">4</td><td class="border">steel</td><td class="border">0.36</td><td class="border">1.43</td><td class="border"></td></tr>
            <tr class="h-[13px]"><td class="border">2</td><td class="border pl-0.5 text-left">PRT0005</td><td class="border pl-0.5 text-left">prt0005.prt</td><td class="border">1</td><td class="border">steel</td><td class="border">64.18</td><td class="border">64.18</td><td class="border"></td></tr>
            <tr class="h-[13px]"><td class="border">1</td><td class="border pl-0.5 text-left">GB/T70.1-2000</td><td class="border pl-0.5 text-left">内六角圆柱头螺钉M6X25-8.8</td><td class="border">8</td><td class="border"></td><td class="border">0.01</td><td class="border">0.07</td><td class="border"></td></tr>
            <tr class="h-[10px] text-[7px]"><th class="border font-normal" rowspan="2">序号</th><th class="border text-[8px] font-normal" rowspan="2">代&emsp;&emsp;号</th><th class="border text-[8px] font-normal" rowspan="2">名&emsp;&emsp;&emsp;&emsp;称</th><th class="border font-normal" rowspan="2">数量</th><th class="border text-[8px] font-normal" rowspan="2">材&emsp;料</th><th class="border font-normal">单 件</th><th class="border font-normal">总 计</th><th class="border text-[8px] font-normal" rowspan="2">备 注</th></tr>
            <tr class="h-[9px] text-[7px]"><th class="border font-normal" colspan="2">重&emsp;量</th></tr>
          </tbody>
        </table>

        <!-- In-graphics toolbar -->
        <div class="absolute top-[7px] left-[320px] flex h-7 divide-x divide-[#ccc] border border-[#ccc] bg-white" role="toolbar" aria-label="视图控制">
          <span class="w-[5px]"></span>
          <button class="flex w-[27px] items-center justify-center" aria-label="重新调整"><svg class="size-[18px]" viewBox="0 0 18 18"><path d="M1.500 2h13v13h-13z" fill="#fff" stroke="#039"/><path d="M1 2h14" stroke="#039" stroke-width="2"/><circle cx="8.500" cy="9" r="4.500" fill="#eee" stroke="#777"/><path d="M12 12l5 5" stroke="#844" stroke-width="2"/></svg></button>
          <button class="flex w-[27px] items-center justify-center" aria-label="放大"><svg class="size-[18px]" viewBox="0 0 18 18"><use href="#mag"/><path d="M4 7h6M7 4v6" stroke="#333" stroke-width="1.500"/></svg></button>
          <button class="flex w-[27px] items-center justify-center" aria-label="缩小"><svg class="size-[18px]" viewBox="0 0 18 18"><use href="#mag"/><path d="M4 7h6" stroke="#333" stroke-width="1.500"/></svg></button>
          <button class="flex w-[27px] items-center justify-center" aria-label="重画"><svg class="size-4" viewBox="0 0 16 16"><path d="M1 1.500h13v13H1z" fill="#eef3ff" stroke="#039" stroke-width="1.500"/><path d="M7 13L13 7v6z" fill="#9ae"/><path d="M4 5l6 3M5 9l7-5" stroke="#89d" stroke-dasharray="1 1"/><path d="M5 14l7-8" stroke="#035" stroke-width="1.500"/></svg></button>
          <button class="flex w-7 items-center justify-center" aria-label="显示样式"><svg class="size-[18px]" viewBox="0 0 18 18"><path d="M1.500 5.500l3-3h11v9l-3 4h-11z" fill="#6ee" stroke="#000"/><path d="M12.500 5.500l3-3v9l-3 4z" fill="#088" stroke="#000"/><path d="M1.500 5.500h11v10h-11z" fill="#fff" stroke="#000"/><path d="M18 15v3h-3z" fill="#555"/></svg></button>
          <button class="flex w-7 items-center justify-center" aria-label="注释显示"><svg class="size-[18px]" viewBox="0 0 18 18"><path d="M5 3.500H1.500v10h9M3 1l-2 2 2 2M12 9v4l2-2" fill="none" stroke="#bbb"/><text x="5" y="8" font-family="Liberation Sans" font-size="9" font-weight="bold" fill="#aaa">AB</text><path d="M18 15v3h-3z" fill="#555"/></svg></button>
          <button class="flex w-7 items-center justify-center" aria-label="基准显示过滤器"><svg class="size-[18px]" viewBox="0 0 18 18"><path d="M1 1l4 4M5 1L1 5M8 9l8 8M16 8l-8 8" stroke="#843" stroke-width="1.500"/><path d="M11 1L3 17" stroke="#843" stroke-width="1.500" stroke-dasharray="4 2"/><path d="M18 15v3h-3z" fill="#555"/></svg></button>
          <button class="flex w-[27px] items-center justify-center" aria-label="平面显示"><svg class="size-[18px]" viewBox="0 0 18 18"><path d="M5.500 3.500h11l-4 9h-11z" fill="#fff" stroke="#a73" stroke-width="1.500"/><use href="#eye" x="6" y="9" width="12" height="8"/></svg></button>
          <button class="flex w-[27px] items-center justify-center border-y-2 border-t-[#999] border-b-[#ccc] bg-linear-to-b from-white from-60% to-[#ccc]" aria-label="轴显示"><svg class="size-[18px]" viewBox="0 0 18 18"><path d="M11 1L3 17" stroke="#a73" stroke-width="1.500" stroke-dasharray="5 2"/><use href="#eye" x="6" y="9" width="12" height="8"/></svg></button>
          <button class="flex w-[27px] items-center justify-center" aria-label="点显示"><svg class="size-[18px]" viewBox="0 0 18 18"><path d="M4 1l4 4M8 1L4 5M11 4l4 4M15 4l-4 4M1 10l4 4M5 10l-4 4" stroke="#a73" stroke-width="1.500"/><use href="#eye" x="6" y="9" width="12" height="8"/></svg></button>
          <button class="flex w-[27px] items-center justify-center" aria-label="坐标系显示"><svg class="size-[18px]" viewBox="0 0 18 18"><path d="M2 8h12M4 3l8 10M11 1L4 15" stroke="#a73" stroke-width="1.200"/><path d="M1 1l2 3 2-3M3 4v2M13 6l4 4M17 6l-4 4M1 12h4l-4 4h4" fill="none" stroke="#888"/><use href="#eye" x="6" y="9" width="12" height="8"/></svg></button>
          <span class="w-1"></span>
        </div>
      </div>
      <!-- Sheet tabs -->
      <footer class="flex h-6 shrink-0 flex-col border-t border-r border-[#ccc] pt-1">
        <div class="flex flex-1 items-center border-t border-[#ccc]">
          <button class="flex w-4 justify-center" aria-label="第一页"><svg class="h-2 w-[11px]" viewBox="0 0 11 8"><path d="M5.500 0v8L0 4zM11 0v8L5.500 4z" fill="#666"/></svg></button>
          <button class="flex w-[17px] justify-center" aria-label="上一页"><svg class="h-2 w-[7px]" viewBox="0 0 7 8"><path d="M7 0v8L0 4z" fill="#999"/></svg></button>
          <button class="flex w-[15px] justify-center" aria-label="下一页"><svg class="h-2 w-[7px]" viewBox="0 0 7 8"><path d="M0 0v8l7-4z" fill="#999"/></svg></button>
          <button class="flex w-5 justify-center" aria-label="最后一页"><svg class="h-2 w-[11px]" viewBox="0 0 11 8"><path d="M0 0v8l5.500-4zM5.500 0v8L11 4z" fill="#666"/></svg></button>
          <button class="ml-1 flex w-[21px] items-center justify-center self-stretch border-x border-b border-[#ccc]" aria-label="新页面"><svg class="size-[7px]" viewBox="0 0 7 7"><path d="M0 3.500h7M3.500 0v7" stroke="#333"/></svg></button>
          <button class="flex w-[74px] items-center justify-center gap-2 self-stretch border-r border-[#ccc] text-[13px] font-medium">页面 <span class="text-xs">1</span></button>
        </div>
      </footer>
    </main>
  </div>

  <!-- Network speed widget -->
  <div class="absolute top-[79px] right-[167px] flex h-[51px] w-[121px] items-center rounded-full border border-[#ccc] bg-white pl-[5px] font-['Noto_Sans',sans-serif] text-[11px] shadow-[0_4px_0_#ccc]">
    <svg class="size-[38px]" viewBox="0 0 38 38"><circle cx="19" cy="19" r="19" fill="#33cc66"/><path d="M6 16c8-8 18-8 26 0M10 20c6-5 12-5 18 0M14 24.500c3-3 7-3 10 0" fill="none" stroke="#fff" stroke-width="2.800"/><circle cx="19" cy="28" r="2" fill="#fff"/></svg>
    <div class="ml-1.5 flex flex-col gap-1 leading-4 text-[#555]">
      <span class="flex items-center gap-[5px]"><svg class="h-3 w-2.5" viewBox="0 0 10 12"><path d="M3 1v9M0 7l3.500 4" fill="none" stroke="#0c6" stroke-width="1.800"/><path d="M7 11V2M6.500 1L10 5" fill="none" stroke="#f60" stroke-width="1.800"/></svg>0.00K/s</span>
      <span class="flex items-center gap-[5px]"><svg class="h-3 w-2.5" viewBox="0 0 10 12"><path d="M2 0h4v2H2z" fill="#0c6"/><path d="M1.700 2.700h6.600v8.500H1.700z" fill="#fff" stroke="#0c6" stroke-width="1.500"/><path d="M1 7h8v5H1z" fill="#0c6"/></svg>1</span>
    </div>
  </div>

  <!-- Capture tool window -->
  <div class="absolute -top-px right-0 flex w-[167px] flex-col rounded-b-md border border-[#99a] bg-linear-to-b from-[#ccccff] from-40% to-[#0c4444] to-95% pr-[3px] pb-[5px] pl-[5px] font-['Liberation_Sans','Noto_Sans_CJK_SC',sans-serif] text-black">
    <div class="flex h-[26px] items-center">
      <svg class="size-4" viewBox="0 0 16 16"><path d="M0 1h14v7H0z" fill="#156"/><path d="M2 3h10v2H2z" fill="#9cc"/><g fill="#fff" stroke="#222"><path d="M.5 6.500h4v5h-4zM5.500 7.500h4v6h-4zM10.500 8.500h5v6h-5z"/><path d="M2 9h2M7 10.500h2M12 11.500h3"/></g></svg>
      <span class="mb-0.5 ml-1 font-['Open_Sans',sans-serif] text-xs text-[#222]">Gif-...</span>
      <div class="mb-2.5 ml-auto flex h-4 overflow-hidden rounded-b border border-t-0 border-[#555]">
        <button class="flex w-7 items-center justify-center border-r border-[#557] bg-linear-to-b from-[#eef] to-[#99b]" aria-label="最小化"><span class="h-1 w-3 border border-[#555] bg-white"></span></button>
        <button class="flex w-7 items-center justify-center border-r border-[#557] bg-linear-to-b from-[#cff] to-[#9bd]" aria-label="最大化"><span class="h-2 w-2.5 border-2 border-[#aaa] bg-white"></span></button>
        <button class="flex w-[46px] items-center justify-center bg-linear-to-b from-[#e99] from-20% via-[#b33] via-50% to-[#c44]" aria-label="关闭"><svg class="h-2.5 w-3" viewBox="0 0 12 10"><path d="M1.500 1l9 8M10.500 1l-9 8" stroke="#555" stroke-width="4"/><path d="M1.500 1l9 8M10.500 1l-9 8" stroke="#fff" stroke-width="2.500"/></svg></button>
      </div>
    </div>
    <div class="flex flex-col border border-[#334] bg-white pb-px text-xs font-bold">
      <div class="flex h-[18px] items-center gap-[15px] border-b border-white bg-linear-to-b from-white from-30% to-[#ccf] to-40% pl-1.5 font-['Open_Sans','Noto_Sans_CJK_SC',sans-serif] font-normal"><button>文件(F)</button><button class="text-[#888]">编辑(E)</button></div>
      <div class="flex flex-col px-[3px] whitespace-nowrap">
        <div class="mt-[5px] flex h-[25px] items-center justify-center border-y-[3px] border-double border-black">Unregistered Copy</div>
        <div class="mt-[3px] flex gap-0.5">
          <button class="h-[22px] w-[45px] border border-r-2 border-b-2 border-[#ccc] border-r-[#666] border-b-[#666] text-[13px] leading-none text-[#999]">开始</button>
          <button class="h-[22px] w-[45px] border border-r-2 border-b-2 border-[#ccc] border-r-[#666] border-b-[#666] text-[13px] leading-none text-[#999]">捕捉</button>
          <button class="h-[22px] w-[45px] border border-r-2 border-b-2 border-[#ccc] border-r-[#666] border-b-[#666] text-[13px] leading-none">停止</button>
        </div>
        <p class="mt-0.5 h-[15px] text-[13px] leading-[15px]">0 帧 (0 字节)</p>
        <h3 class="mt-[15px] flex h-[15px] items-center gap-[3px] text-[13px] leading-[15px] before:h-px before:w-[9px] before:bg-black after:h-px after:flex-1 after:bg-black">捕捉区域</h3>
        <p class="h-[15px] text-[13px] leading-[15px]">尺寸：1349x725</p>
        <p class="h-[15px] text-[13px] leading-[15px]">左上角：8,3</p>
        <div class="flex h-[23px] items-center justify-between">
          <label class="relative flex items-center gap-[5px] pl-0.5 text-[13px]"><input type="checkbox" checked class="peer size-[15px] appearance-none border-2 border-[#555] border-r-[#ccc] border-b-[#ccc]"><svg class="pointer-events-none absolute left-0.5 hidden size-[15px] peer-checked:block"><use href="#tick"/></svg>显示区域</label>
          <button class="h-[22px] w-[71px] border border-r-2 border-b-2 border-[#ccc] border-r-[#666] border-b-[#666] text-[13px] leading-none text-[#999]">选择区域</button>
        </div>
        <button class="mt-px h-[22px] w-[71px] border border-r-2 border-b-2 border-[#ccc] border-r-[#666] border-b-[#666] text-[13px] leading-none">刷新屏幕</button>
        <h3 class="mt-[19px] flex h-[15px] items-center gap-[3px] text-[13px] leading-[15px] before:h-px before:w-[9px] before:bg-black after:h-px after:flex-1 after:bg-black">捕捉选项</h3>
        <label class="relative flex h-[19px] items-center gap-1 text-[13px]">帧数/秒：<select class="h-[17px] w-[62px] appearance-none border border-r-2 border-b-2 border-black pl-3 text-xs leading-none"><option>5 fps</option></select><svg class="pointer-events-none absolute left-[109px] h-[7px] w-2" viewBox="0 0 8 7"><path d="M0 0h8L4 7z"/></svg></label>
        <div class="mt-px flex flex-col text-[13px]">
          <label class="relative flex h-[22px] items-center gap-[5px] pl-0.5"><input type="checkbox" checked class="peer size-[15px] appearance-none border-2 border-[#555] border-r-[#ccc] border-b-[#ccc]"><svg class="pointer-events-none absolute left-0.5 hidden size-[15px] peer-checked:block"><use href="#tick"/></svg>透明</label>
          <label class="relative flex h-[22px] items-center gap-[5px] pl-0.5"><input type="checkbox" checked class="peer size-[15px] appearance-none border-2 border-[#555] border-r-[#ccc] border-b-[#ccc]"><svg class="pointer-events-none absolute left-0.5 hidden size-[15px] peer-checked:block"><use href="#tick"/></svg>记录时间信息</label>
          <label class="relative flex h-[22px] items-center gap-[5px] pl-0.5"><input type="checkbox" checked class="peer size-[15px] appearance-none border-2 border-[#555] border-r-[#ccc] border-b-[#ccc]"><svg class="pointer-events-none absolute left-0.5 hidden size-[15px] peer-checked:block"><use href="#tick"/></svg>循环</label>
          <label class="relative flex h-[22px] items-center gap-[5px] pl-0.5"><input type="checkbox" checked class="peer size-[15px] appearance-none border-2 border-[#555] border-r-[#ccc] border-b-[#ccc]"><svg class="pointer-events-none absolute left-0.5 hidden size-[15px] peer-checked:block"><use href="#tick"/></svg>描边</label>
          <label class="relative flex h-[22px] items-center gap-[5px] pl-0.5"><input type="checkbox" checked class="peer size-[15px] appearance-none border-2 border-[#555] border-r-[#ccc] border-b-[#ccc]"><svg class="pointer-events-none absolute left-0.5 hidden size-[15px] peer-checked:block"><use href="#tick"/></svg>捕捉光标</label>
          <label class="relative flex h-[22px] items-center gap-[5px] pl-0.5"><input type="checkbox" checked class="peer size-[15px] appearance-none border-2 border-[#555] border-r-[#ccc] border-b-[#ccc]"><svg class="pointer-events-none absolute left-0.5 hidden size-[15px] peer-checked:block"><use href="#tick"/></svg><span class="text-xs">Explorer 2.0 兼容</span></label>
        </div>
        <label class="relative flex h-5 items-center gap-[3px] text-[13px]">录制比例：<select class="h-[17px] w-[57px] appearance-none border border-r-2 border-b-2 border-black pl-2.5 text-xs leading-none"><option>100%</option></select><svg class="pointer-events-none absolute left-[113px] h-[7px] w-2" viewBox="0 0 8 7"><path d="M0 0h8L4 7z"/></svg></label>
      </div>
    </div>
  </div>
</div>
</body>
</html>
